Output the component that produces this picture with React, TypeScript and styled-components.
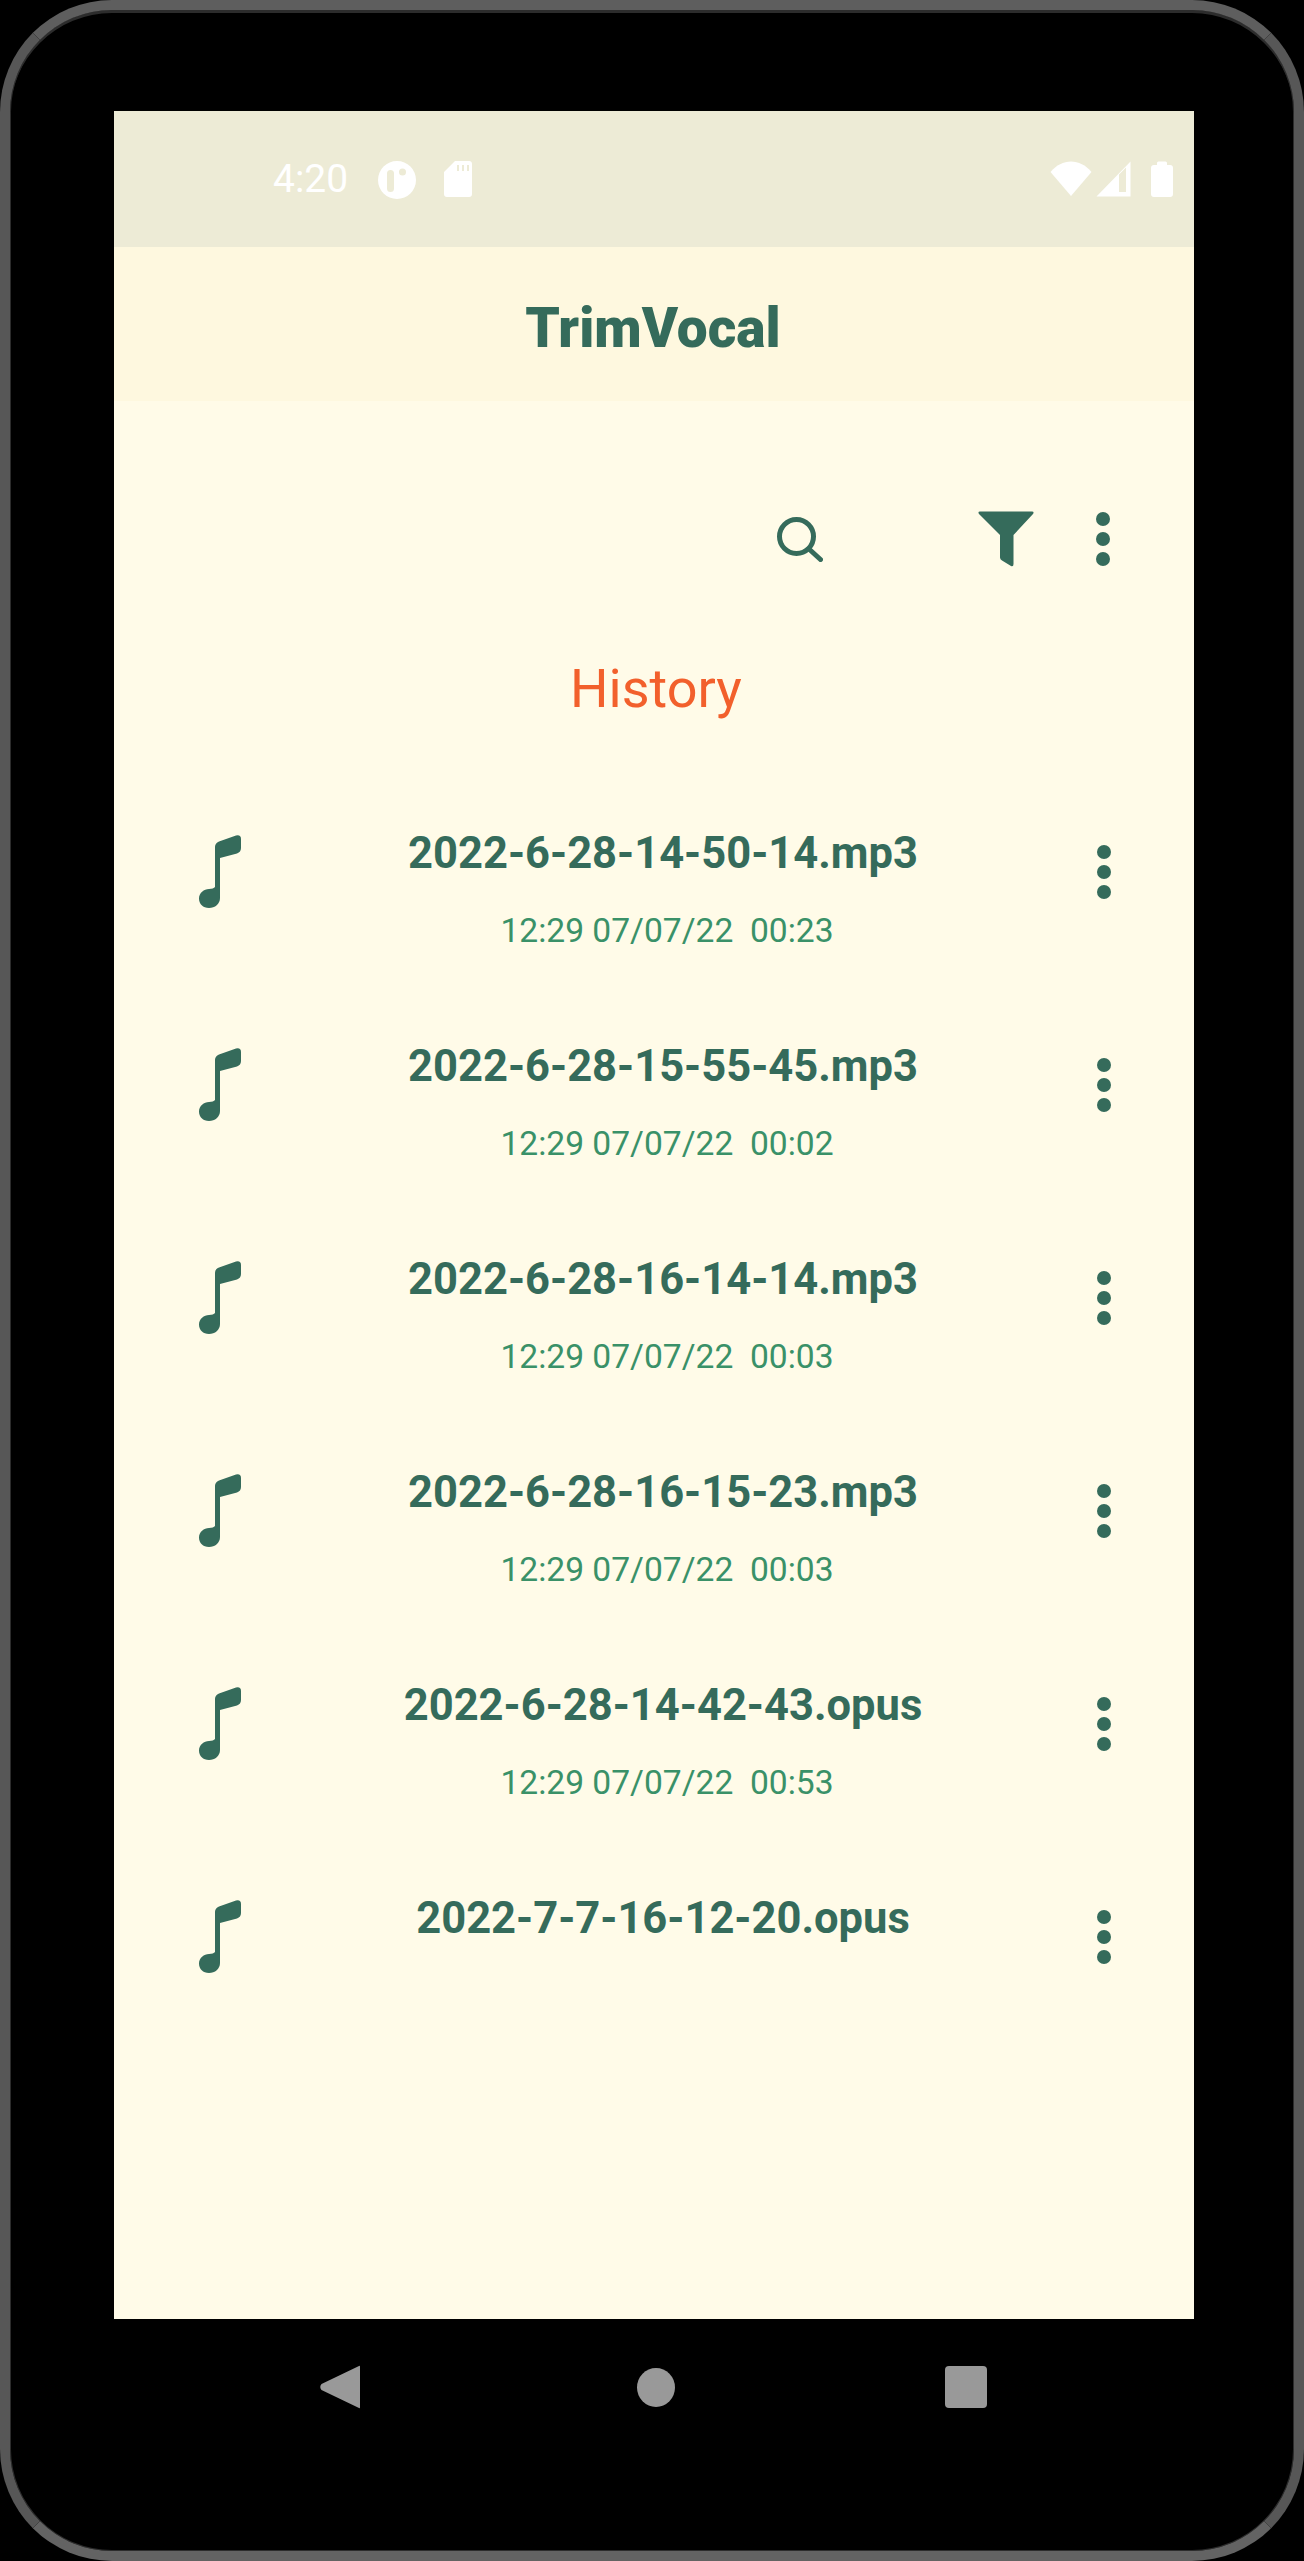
import React from "react";
import styled, { createGlobalStyle } from "styled-components";

const Global = createGlobalStyle`
  html, body { margin: 0; padding: 0; background: #000; }
  * { box-sizing: border-box; }
  body { font-family: Roboto, "Liberation Sans", sans-serif; }
`;

const Page = styled.div`
  width: 1304px;
  height: 2561px;
  background: #000;
`;
const Device = styled.div`
  width: 1304px;
  height: 2561px;
  border: 10px solid #575757;
  border-top-color: #5e5e5e;
  border-bottom-color: #636363;
  border-radius: 112px;
  padding: 101px 100px 0 104px;
  background: #000;
  box-shadow: inset 0 3px 0 #2c2c2c, inset 0 0 0 1px #2c2c2c;
`;
const Screen = styled.main`
  width: 1080px;
  height: 2208px;
  background: #fffbe8;
  display: flex;
  flex-direction: column;
`;
const StatusBar = styled.div`
  height: 136px;
  background: #edebd6;
  display: flex;
  padding: 50px 21px 0 159px;
  color: #fff;
`;
const Clock = styled.span`
  font-size: 39px;
  line-height: 37px;
  height: 37px;
  width: 77px;
`;
const StatusLeft = styled.div`
  display: flex;
  gap: 28px;
  flex: 1;
`;
const StatusRight = styled.div`
  display: flex;
  gap: 4px;
  align-items: flex-start;
`;
const AppBar = styled.header`
  height: 154px;
  background: #fef8df;
  display: flex;
  align-items: center;
  justify-content: center;
  padding: 8px 2px 0 0;
`;
const AppTitle = styled.h1`
  margin: 0;
  color: #356b5b;
  font-size: 55px;
  font-weight: 900;
  line-height: 64px;
`;
const Toolbar = styled.div`
  display: flex;
  justify-content: flex-end;
  align-items: center;
  padding: 110px 84px 0 0;
`;
const FilterButton = styled.span`
  display: flex;
  margin-left: 155px;
  margin-right: 62px;
`;
const Heading = styled.h2`
  margin: 90px 0 44px;
  color: #f2602c;
  font-size: 54px;
  font-weight: 400;
  line-height: 64px;
  text-align: center;
  padding-left: 4px;
`;
const List = styled.div`
  display: flex;
  flex-direction: column;
`;
const Row = styled.div`
  height: 213px;
  display: flex;
  align-items: center;
  padding: 0 83px 0 85px;
`;
const RowText = styled.div`
  flex: 1;
  align-self: flex-start;
  padding: 63px 12px 0 0;
  text-align: center;
`;
const FileName = styled.div`
  color: #356b5b;
  font-size: 43.5px;
  font-weight: 700;
  line-height: 52px;
`;
const Meta = styled.div`
  margin-top: 31px;
  padding-left: 8px;
  color: #3a9168;
  font-size: 33.6px;
  line-height: 40px;
  white-space: pre;
`;
const NavBar = styled.nav`
  display: grid;
  grid-template-columns: 317px 308px 42px;
  align-items: center;
  padding: 46px 0 0 206px;
`;

const Green = "#356b5b";

const Wifi = () => (
  <svg width="42" height="36" viewBox="0 0 42 36">
    <path d="M0.5 11 C12 -3 30 -3 41.5 11 L21 35 Z" fill="#fff" />
  </svg>
);
const Signal = () => (
  <svg width="35" height="36" viewBox="0 0 35 36">
    <path fillRule="evenodd" d="M34.5 0.5 V35.5 H0.5 Z M23 13.5 V31 H30 V6.5 Z" fill="#fff" />
  </svg>
);
const Battery = () => (
  <svg width="22" height="36" viewBox="0 0 22 36" style={{ marginLeft: 16 }}>
    <path d="M6 4 V2 Q6 0.5 7.5 0.5 H14.5 Q16 0.5 16 2 V4 H19 Q22 4 22 7 V33 Q22 36 19 36 H3 Q0 36 0 33 V7 Q0 4 3 4 Z" fill="#fff" />
  </svg>
);
const Profile = () => (
  <svg width="38" height="38" viewBox="0 0 38 38">
    <path
      fillRule="evenodd"
      fill="#fff"
      d="M19 0 A19 19 0 1 1 19 38 A19 19 0 1 1 19 0 Z M12.5 9 A3.5 3.5 0 0 0 9 12.5 V27.5 A3.5 3.5 0 0 0 16 27.5 V12.5 A3.5 3.5 0 0 0 12.5 9 Z M24.5 7.5 A3.5 3.5 0 1 0 24.5 14.5 A3.5 3.5 0 1 0 24.5 7.5 Z"
    />
  </svg>
);
const SdCard = () => (
  <svg width="28" height="36" viewBox="0 0 28 36">
    <path
      fillRule="evenodd"
      fill="#fff"
      d="M11 0 H25 Q28 0 28 3 V33 Q28 36 25 36 H3 Q0 36 0 33 V11 Z M13 4 V10 H15 V4 Z M18 4 V10 H20 V4 Z M23 4 V10 H25 V4 Z"
    />
  </svg>
);
const Search = () => (
  <svg width="46" height="45" viewBox="0 0 46 45" style={{ display: "block" }}>
    <circle cx="19.5" cy="19.5" r="17" fill="none" stroke={Green} strokeWidth="5" />
    <path d="M32 32 L43.5 42.5" stroke={Green} strokeWidth="5" strokeLinecap="round" />
  </svg>
);
const Filter = () => (
  <svg width="56" height="56" viewBox="0 0 56 56" style={{ display: "block" }}>
    <path
      d="M2 0.5 H54 Q56.5 0.5 55 3 L35.5 24 V53 Q35.5 56 33 55 L24 49.5 Q22 48.5 22 46.5 V24 L1 3 Q-0.5 0.5 2 0.5 Z"
      fill={Green}
    />
  </svg>
);
const Dots = () => (
  <svg width="14" height="54" viewBox="0 0 14 54" style={{ display: "block", flexShrink: 0 }}>
    <circle cx="7" cy="7" r="7" fill={Green} />
    <circle cx="7" cy="27" r="7" fill={Green} />
    <circle cx="7" cy="47" r="7" fill={Green} />
  </svg>
);
const Note = () => (
  <svg width="42" height="73" viewBox="0 0 42 73" style={{ display: "block", flexShrink: 0 }}>
    <path
      d="M16 12 Q16 8 20 6.5 L37 0.5 Q42 -0.5 42 4 V13 Q42 17 38 18.5 L21 23 V63 C21 69 16 73 10 73 C4 73 0 69 0 63.5 C0 58 5 54 10 54 C13 54 15 53 16 52 Z"
      fill={Green}
    />
  </svg>
);
const Back = () => (
  <svg width="40" height="44" viewBox="0 0 40 44" style={{ display: "block" }}>
    <path d="M39 1 Q40 0 40 2 V42 Q40 44 39 43 L1.5 25 Q-1 22 1.5 19 Z" fill="#999" />
  </svg>
);
const Home = () => (
  <svg width="38" height="39" viewBox="0 0 38 39" style={{ display: "block" }}>
    <ellipse cx="19" cy="19.5" rx="19" ry="19.5" fill="#999" />
  </svg>
);
const Recents = () => (
  <svg width="42" height="42" viewBox="0 0 42 42" style={{ display: "block" }}>
    <rect width="42" height="42" rx="4" fill="#999" />
  </svg>
);

const files = [
  { name: "2022-6-28-14-50-14.mp3", meta: "12:29 07/07/22  00:23" },
  { name: "2022-6-28-15-55-45.mp3", meta: "12:29 07/07/22  00:02" },
  { name: "2022-6-28-16-14-14.mp3", meta: "12:29 07/07/22  00:03" },
  { name: "2022-6-28-16-15-23.mp3", meta: "12:29 07/07/22  00:03" },
  { name: "2022-6-28-14-42-43.opus", meta: "12:29 07/07/22  00:53" },
  { name: "2022-7-7-16-12-20.opus", meta: "" },
];

export default function App() {
  return (
    <Page>
      <Global />
      <Device>
        <Screen>
          <StatusBar>
            <StatusLeft>
              <Clock>4:20</Clock>
              <Profile />
              <SdCard />
            </StatusLeft>
            <StatusRight>
              <Wifi />
              <Signal />
              <Battery />
            </StatusRight>
          </StatusBar>
          <AppBar>
            <AppTitle>TrimVocal</AppTitle>
          </AppBar>
          <Toolbar>
            <Search />
            <FilterButton>
              <Filter />
            </FilterButton>
            <Dots />
          </Toolbar>
          <Heading>History</Heading>
          <List>
            {files.map((f) => (
              <Row key={f.name}>
                <Note />
                <RowText>
                  <FileName>{f.name}</FileName>
                  {f.meta && <Meta>{f.meta}</Meta>}
                </RowText>
                <Dots />
              </Row>
            ))}
          </List>
        </Screen>
        <NavBar>
          <Back />
          <Home />
          <Recents />
        </NavBar>
      </Device>
    </Page>
  );
}
